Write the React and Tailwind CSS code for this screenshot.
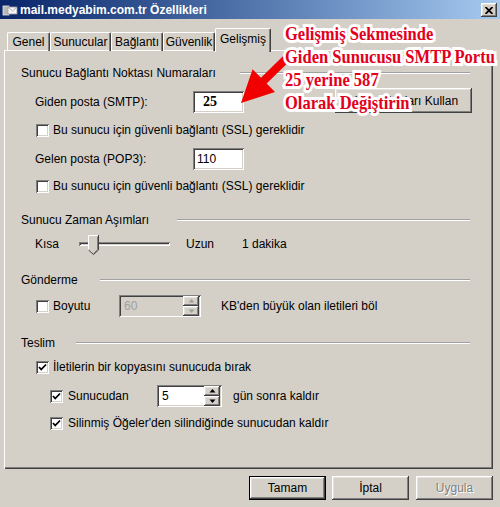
import React from "react";

const raised =
  "shadow-[inset_-1px_-1px_#404040,inset_1px_1px_#ffffff,inset_-2px_-2px_#808080,inset_2px_2px_#e4e2dc]";
const sunken =
  "shadow-[inset_1px_1px_#808080,inset_-1px_-1px_#ffffff,inset_2px_2px_#404040,inset_-2px_-2px_#d4d0c8]";

function Check({ checked }) {
  return (
    <div className={`w-[13px] h-[13px] shrink-0 bg-white ${sunken} relative`}>
      {checked && (
        <svg className="absolute left-0 top-0" width="13" height="13" viewBox="0 0 13 13">
          <polyline points="3,6 5.2,8.5 10,3.5" fill="none" stroke="#000" strokeWidth="1.8" />
        </svg>
      )}
    </div>
  );
}

function Spin({ disabled }) {
  const c = disabled ? "#a0a0a0" : "#000";
  return (
    <div className="flex flex-col w-[16px] h-[20px] mr-[2px] gap-0">
      <div className={`h-[10px] w-[16px] bg-[#d4d0c8] ${raised} flex items-center justify-center`}>
        <svg width="7" height="4" viewBox="0 0 7 4">
          <polygon points="3.5,0 6.5,3.5 0.5,3.5" fill={c} />
        </svg>
      </div>
      <div className={`h-[10px] w-[16px] bg-[#d4d0c8] ${raised} flex items-center justify-center`}>
        <svg width="7" height="4" viewBox="0 0 7 4">
          <polygon points="0.5,0.5 6.5,0.5 3.5,4" fill={c} />
        </svg>
      </div>
    </div>
  );
}

function Header({ children, gap }) {
  return (
    <div className="h-[20px] flex items-center">
      <span className="whitespace-nowrap">{children}</span>
      <div className={`flex-1 h-0 border-t border-t-[#a0a0a0] border-b border-b-white ${gap}`} />
    </div>
  );
}

export default function App() {
  return (
    <div className="relative w-[500px] h-[507px] bg-[#d4d0c8] overflow-hidden font-['Liberation_Sans',Arial,sans-serif] text-[12px] text-black leading-none">
      {/* Title bar */}
      <div className="h-[19px] flex items-center bg-linear-to-r from-[#0a246a] to-[#a6caf0] relative">
        <svg className="ml-[2px]" width="16" height="14" viewBox="0 0 16 14">
          <rect x="1" y="3" width="6" height="9" fill="#b8b8b8" stroke="#e8e8e8" strokeWidth="0.8" />
          <rect x="6" y="4" width="9" height="7" fill="#f4f4f4" stroke="#9a9a9a" strokeWidth="0.8" />
          <polyline points="6,4 10.5,8 15,4" fill="none" stroke="#9a9a9a" strokeWidth="0.8" />
        </svg>
        <span className="ml-[2px] text-white font-bold text-[12px] whitespace-nowrap">
          mail.medyabim.com.tr Özellikleri
        </span>
        <div className={`absolute left-[481px] top-[3px] w-[16px] h-[14px] bg-[#d4d0c8] ${raised} flex items-center justify-center`}>
          <svg width="8" height="7" viewBox="0 0 8 7">
            <line x1="0.5" y1="0" x2="7.5" y2="7" stroke="#000" strokeWidth="1.8" />
            <line x1="7.5" y1="0" x2="0.5" y2="7" stroke="#000" strokeWidth="1.8" />
          </svg>
        </div>
      </div>

      {/* Tabs */}
      <div className="mt-[9px] h-[23px] flex items-end pl-[7px] relative z-10">
        {[
          ["Genel", "w-[43px]"],
          ["Sunucular", "w-[61px]"],
          ["Bağlantı", "w-[52px]"],
          ["Güvenlik", "w-[52px]"],
        ].map(([t, w]) => (
          <div
            key={t}
            className={`${w} h-[19px] flex items-center justify-center border-l border-t border-white rounded-t-[2px] shadow-[inset_-1px_0_#808080] border-r border-r-[#404040]`}
          >
            {t}
          </div>
        ))}
        <div className="w-[56px] h-[24px] -mb-px flex items-center justify-center pb-[3px] bg-[#d4d0c8] border-l border-t border-white rounded-t-[2px] border-r border-r-[#404040] shadow-[inset_-1px_0_#808080]">
          Gelişmiş
        </div>
      </div>

      {/* Panel */}
      <div className="ml-[4px] w-[489px] h-[419px] -mt-px relative shadow-[inset_1px_1px_#ffffff,inset_-1px_-1px_#404040,inset_-2px_-2px_#808080] pl-[17px] pr-[21px] pt-[13px] flex flex-col">
        <Header gap="ml-[24px] mr-[2px]">Sunucu Bağlantı Noktası Numaraları</Header>

        <div className="mt-[8px] h-[22px] flex items-center pl-[14px]">
          <span className="w-[158px]">Giden posta (SMTP):</span>
          <div className={`w-[51px] h-[22px] bg-white ${sunken} flex items-center pl-[10px] font-['Liberation_Serif',serif] font-bold text-[14px]`}>
            25
          </div>
          <div className={`ml-auto self-end w-[137px] h-[25px] bg-[#d4d0c8] ${raised} flex items-center justify-center`}>
            Varsayılanları Kullan
          </div>
        </div>

        <div className="mt-[9px] h-[16px] flex items-center pl-[15px] gap-[4px]">
          <Check />
          <span>Bu sunucu için güvenli bağlantı (SSL) gereklidir</span>
        </div>

        <div className="mt-[10px] h-[22px] flex items-center pl-[14px]">
          <span className="w-[158px]">Gelen posta (POP3):</span>
          <div className={`w-[51px] h-[22px] bg-white ${sunken} flex items-center pl-[4px]`}>110</div>
        </div>

        <div className="mt-[8px] h-[16px] flex items-center pl-[15px] gap-[4px]">
          <Check />
          <span>Bu sunucu için güvenli bağlantı (SSL) gereklidir</span>
        </div>

        <div className="mt-[16px]">
          <Header gap="ml-[28px] mr-[2px]">Sunucu Zaman Aşımları</Header>
        </div>

        <div className="mt-[3px] h-[22px] flex items-center pl-[14px]">
          <span className="w-[44px]">Kısa</span>
          <div className="relative w-[91px] h-[22px]">
            <div className={`absolute left-0 top-[9px] w-[91px] h-[4px] bg-[#d4d0c8] ${sunken}`} />
            <svg className="absolute left-[9px] top-[2px]" width="11" height="20" viewBox="0 0 11 20">
              <polygon points="0,0 11,0 11,15 5.5,20 0,15" fill="#d4d0c8" />
              <polyline points="0.5,15 0.5,0.5 10,0.5" fill="none" stroke="#ffffff" strokeWidth="1" />
              <polyline points="10.5,0 10.5,15 5.5,19.5 0.5,15" fill="none" stroke="#404040" strokeWidth="1" />
              <polyline points="9.5,1.5 9.5,14.5 5.5,18.5" fill="none" stroke="#808080" strokeWidth="1" />
            </svg>
          </div>
          <span className="ml-[16px] w-[56px]">Uzun</span>
          <span>1 dakika</span>
        </div>

        <div className="mt-[15px]">
          <Header gap="ml-[22px] mr-[2px]">Gönderme</Header>
        </div>

        <div className="mt-[5px] h-[22px] flex items-center pl-[15px]">
          <Check />
          <span className="ml-[4px] w-[66px]">Boyutu</span>
          <div className={`w-[82px] h-[22px] bg-[#d4d0c8] ${sunken} flex items-center justify-between pl-[5px] text-[#a0a0a0]`}>
            <span>60</span>
            <Spin disabled />
          </div>
          <span className="ml-[20px]">KB'den büyük olan iletileri böl</span>
        </div>

        <div className="mt-[16px]">
          <Header gap="ml-[21px] mr-[2px]">Teslim</Header>
        </div>

        <div className="mt-[6px] h-[16px] flex items-center pl-[15px] gap-[4px]">
          <Check checked />
          <span>İletilerin bir kopyasını sunucuda bırak</span>
        </div>

        <div className="mt-[10px] h-[22px] flex items-center pl-[29px]">
          <Check checked />
          <span className="ml-[5px] w-[89px]">Sunucudan</span>
          <div className={`w-[65px] h-[22px] bg-white ${sunken} flex items-center justify-between pl-[5px]`}>
            <span>5</span>
            <Spin />
          </div>
          <span className="ml-[11px]">gün sonra kaldır</span>
        </div>

        <div className="mt-[8px] h-[16px] flex items-center pl-[29px] gap-[5px]">
          <Check checked />
          <span>Silinmiş Öğeler'den silindiğinde sunucudan kaldır</span>
        </div>
      </div>

      {/* Bottom buttons */}
      <div className="mt-[7px] flex justify-end pr-[7px]">
        <div className="w-[77px] h-[24px] border border-black">
          <div className={`w-full h-full bg-[#d4d0c8] ${raised} flex items-center justify-center`}>Tamam</div>
        </div>
        <div className={`ml-[6px] w-[77px] h-[24px] bg-[#d4d0c8] ${raised} flex items-center justify-center`}>
          İptal
        </div>
        <div className={`ml-[7px] w-[77px] h-[24px] bg-[#d4d0c8] ${raised} flex items-center justify-center text-[#808080] [text-shadow:1px_1px_0_#ffffff]`}>
          Uygula
        </div>
      </div>

      {/* Red arrow annotation */}
      <svg className="absolute left-0 top-0 pointer-events-none" width="500" height="507" viewBox="0 0 500 507">
        <polygon
          points="241,103 275,92 266.6,83.5 292.8,57.9 287.2,52.1 261,77.7 252.6,69.2"
          fill="#f00000"
        />
      </svg>

      {/* Annotation text */}
      <div className="absolute left-[285px] top-[22px] origin-left scale-x-[0.87] font-['Liberation_Serif','Times_New_Roman',serif] font-bold text-[19px] leading-[23px] text-[#e3001b] whitespace-nowrap [-webkit-text-stroke:6px_white] [paint-order:stroke_fill] pointer-events-none">
        <div>Gelişmiş Sekmesinde</div>
        <div>Giden Sunucusu SMTP Portu</div>
        <div>25 yerine 587</div>
        <div>Olarak Değiştirin</div>
      </div>
    </div>
  );
}
